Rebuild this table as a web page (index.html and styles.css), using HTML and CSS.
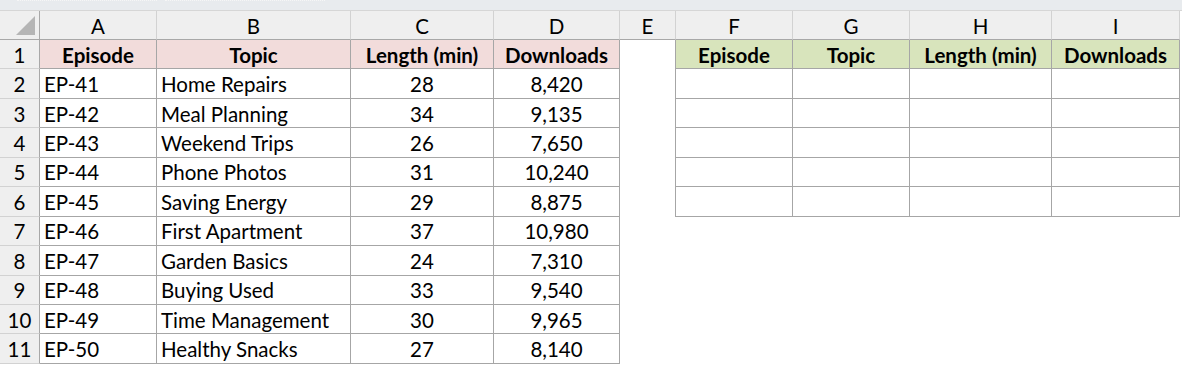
FILE: index.html
```html
<!DOCTYPE html>
<html>
<head>
<meta charset="utf-8">
<link rel="stylesheet" href="styles.css">
</head>
<body>
<div class="topbar"><div class="fx"></div><div class="fx2"></div></div>
<div class="sheet">
  <div class="ch corner"><span class="tri"></span></div>
  <div class="ch">A</div><div class="ch">B</div><div class="ch">C</div><div class="ch">D</div><div class="ch">E</div><div class="ch">F</div><div class="ch">G</div><div class="ch">H</div><div class="ch">I</div>

  <div class="rh">1</div>
  <div class="c hp">Episode</div><div class="c hp">Topic</div><div class="c hp">Length (min)</div><div class="c hp">Downloads</div>
  <div class="e el"></div>
  <div class="c hg">Episode</div><div class="c hg">Topic</div><div class="c hg">Length (min)</div><div class="c hg">Downloads</div>

  <div class="rh">2</div>
  <div class="c l">EP-41</div><div class="c l">Home Repairs</div><div class="c m">28</div><div class="c m">8,420</div>
  <div class="e el"></div><div class="c"></div><div class="c"></div><div class="c"></div><div class="c"></div>

  <div class="rh">3</div>
  <div class="c l">EP-42</div><div class="c l">Meal Planning</div><div class="c m">34</div><div class="c m">9,135</div>
  <div class="e el"></div><div class="c"></div><div class="c"></div><div class="c"></div><div class="c"></div>

  <div class="rh">4</div>
  <div class="c l">EP-43</div><div class="c l">Weekend Trips</div><div class="c m">26</div><div class="c m">7,650</div>
  <div class="e el"></div><div class="c"></div><div class="c"></div><div class="c"></div><div class="c"></div>

  <div class="rh">5</div>
  <div class="c l">EP-44</div><div class="c l">Phone Photos</div><div class="c m">31</div><div class="c m">10,240</div>
  <div class="e el"></div><div class="c"></div><div class="c"></div><div class="c"></div><div class="c"></div>

  <div class="rh">6</div>
  <div class="c l">EP-45</div><div class="c l">Saving Energy</div><div class="c m">29</div><div class="c m">8,875</div>
  <div class="e el"></div><div class="c"></div><div class="c"></div><div class="c"></div><div class="c"></div>

  <div class="rh">7</div>
  <div class="c l">EP-46</div><div class="c l">First Apartment</div><div class="c m">37</div><div class="c m">10,980</div>
  <div class="e"></div><div class="e"></div><div class="e"></div><div class="e"></div><div class="e"></div>

  <div class="rh">8</div>
  <div class="c l">EP-47</div><div class="c l">Garden Basics</div><div class="c m">24</div><div class="c m">7,310</div>
  <div class="e"></div><div class="e"></div><div class="e"></div><div class="e"></div><div class="e"></div>

  <div class="rh">9</div>
  <div class="c l">EP-48</div><div class="c l">Buying Used</div><div class="c m">33</div><div class="c m">9,540</div>
  <div class="e"></div><div class="e"></div><div class="e"></div><div class="e"></div><div class="e"></div>

  <div class="rh">10</div>
  <div class="c l">EP-49</div><div class="c l">Time Management</div><div class="c m">30</div><div class="c m">9,965</div>
  <div class="e"></div><div class="e"></div><div class="e"></div><div class="e"></div><div class="e"></div>

  <div class="rh">11</div>
  <div class="c l">EP-50</div><div class="c l">Healthy Snacks</div><div class="c m">27</div><div class="c m">8,140</div>
  <div class="e"></div><div class="e"></div><div class="e"></div><div class="e"></div><div class="e"></div>
</div>
</body>
</html>
```

FILE: styles.css
```css
* { box-sizing: border-box; }
html, body {
  margin: 0;
  padding: 0;
  background: #ffffff;
  width: 1182px;
  height: 366px;
  overflow: hidden;
  font-family: Lato, "Liberation Sans", sans-serif;
  color: #000;
}
.topbar {
  height: 11px;
  background: #e8ebee;
  border-bottom: 1px solid #d6d6d6;
  display: flex;
  padding-left: 17px;
}
.fx {
  width: 140px;
  height: 1px;
  border-top: 1px dotted #f6f6f6;
}
.fx2 {
  width: 160px;
  margin-left: 8px;
  height: 1px;
  border-top: 1px dotted #f6f6f6;
}
.sheet {
  display: grid;
  grid-template-columns: 40px 117px 194px 143px 126px 56px 117px 117px 142px 128px;
  grid-template-rows: 29px repeat(11, 29.45px);
}
.ch {
  background: #efefef;
  border-right: 1px solid #d2d2d2;
  border-bottom: 1px solid #a8a8a8;
  display: flex;
  align-items: center;
  justify-content: center;
  font-size: 20.5px;
  padding-top: 1px;
}
.corner {
  position: relative;
  border-right: 1px solid #a8a8a8;
}
.tri {
  position: absolute;
  right: 4px;
  bottom: 4px;
  width: 0;
  height: 0;
  border-left: 19px solid transparent;
  border-bottom: 19px solid #b5b5b5;
}
.rh {
  background: #efefef;
  border-right: 1px solid #a8a8a8;
  border-bottom: 1px solid #d2d2d2;
  display: flex;
  align-items: center;
  justify-content: center;
  font-size: 20.5px;
  padding-top: 1px;
}
.c {
  border-right: 1px solid #a6a6a6;
  border-bottom: 1px solid #a6a6a6;
  display: flex;
  align-items: center;
  font-size: 20.5px;
  padding-top: 1px;
  white-space: nowrap;
}
.l { padding-left: 4px; }
.m { justify-content: center; }
.hp {
  background: #f2dcdb;
  font-weight: bold;
  justify-content: center;
}
.hg {
  background: #d8e4bc;
  font-weight: bold;
  justify-content: center;
}
.e { background: #fff; }
.el { border-right: 1px solid #a6a6a6; }
```
